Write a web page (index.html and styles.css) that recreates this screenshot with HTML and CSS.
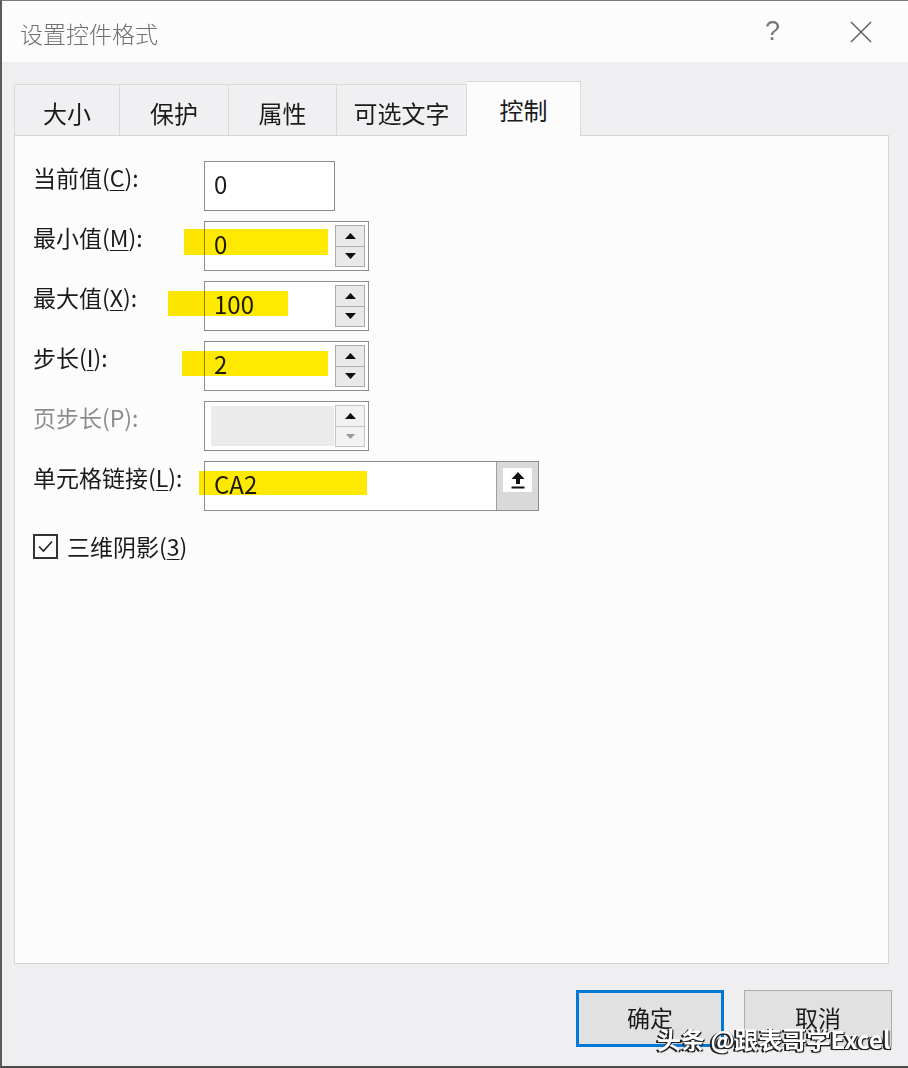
FILE: index.html
```html
<!DOCTYPE html>
<html lang="zh-CN">
<head>
<meta charset="utf-8">
<title>设置控件格式</title>
<link rel="stylesheet" href="styles.css">
</head>
<body>
<div class="window">
  <div class="titlebar">
    <span class="title">设置控件格式</span>
    <span class="help">?</span>
    <span class="close">
      <svg width="22" height="22" viewBox="0 0 22 22"><path d="M1 1 L21 21 M21 1 L1 21" stroke="#555" stroke-width="1.3" fill="none"/></svg>
    </span>
  </div>

  <div class="tabs">
    <div class="tab tab-size">大小</div>
    <div class="tab tab-protect">保护</div>
    <div class="tab tab-prop">属性</div>
    <div class="tab tab-alt">可选文字</div>
    <div class="tab tab-ctrl active">控制</div>
  </div>

  <div class="panel">
    <div class="row">
      <div class="label">当前值(<u>C</u>):</div>
      <div class="input">0</div>
    </div>
    <div class="row">
      <div class="label">最小值(<u>M</u>):</div>
      <div class="spin">
        <div class="val">0</div>
        <div class="btns">
          <div class="sbtn"><svg width="11" height="6" viewBox="0 0 11 6"><path d="M0 6 L5.5 0 L11 6Z" fill="#111"/></svg></div>
          <div class="sbtn"><svg width="11" height="6" viewBox="0 0 11 6"><path d="M0 0 L5.5 6 L11 0Z" fill="#111"/></svg></div>
        </div>
      </div>
    </div>
    <div class="row">
      <div class="label">最大值(<u>X</u>):</div>
      <div class="spin">
        <div class="val">100</div>
        <div class="btns">
          <div class="sbtn"><svg width="11" height="6" viewBox="0 0 11 6"><path d="M0 6 L5.5 0 L11 6Z" fill="#111"/></svg></div>
          <div class="sbtn"><svg width="11" height="6" viewBox="0 0 11 6"><path d="M0 0 L5.5 6 L11 0Z" fill="#111"/></svg></div>
        </div>
      </div>
    </div>
    <div class="row">
      <div class="label">步长(<u>I</u>):</div>
      <div class="spin">
        <div class="val">2</div>
        <div class="btns">
          <div class="sbtn"><svg width="11" height="6" viewBox="0 0 11 6"><path d="M0 6 L5.5 0 L11 6Z" fill="#111"/></svg></div>
          <div class="sbtn"><svg width="11" height="6" viewBox="0 0 11 6"><path d="M0 0 L5.5 6 L11 0Z" fill="#111"/></svg></div>
        </div>
      </div>
    </div>
    <div class="row">
      <div class="label disabled">页步长(P):</div>
      <div class="spin spin-disabled">
        <div class="val"></div>
        <div class="btns">
          <div class="sbtn"><svg width="11" height="6" viewBox="0 0 11 6"><path d="M0 6 L5.5 0 L11 6Z" fill="#111"/></svg></div>
          <div class="sbtn"><svg width="9" height="5" viewBox="0 0 11 6"><path d="M0 0 L5.5 6 L11 0Z" fill="#9a9a9a"/></svg></div>
        </div>
      </div>
    </div>
    <div class="row">
      <div class="label">单元格链接(<u>L</u>):</div>
      <div class="link">
        <div class="val">CA2</div>
        <div class="link-btn">
          <div class="link-icon">
            <svg width="14" height="17" viewBox="0 0 14 17"><path d="M7 0 L13.5 7 L9 7 L9 12 L5 12 L5 7 L0.5 7Z" fill="#111"/><rect x="0.5" y="14.5" width="13" height="2" fill="#111"/></svg>
          </div>
        </div>
      </div>
    </div>
    <div class="check-row">
      <div class="checkbox">
        <svg width="21" height="21" viewBox="0 0 21 21"><path d="M4 10.5 L8.5 15 L17 5.5" stroke="#222" stroke-width="1.6" fill="none"/></svg>
      </div>
      <div class="check-label">三维阴影(<u>3</u>)</div>
    </div>
  </div>

  <div class="footer">
    <button class="btn primary">确定</button>
    <button class="btn">取消</button>
  </div>

  <span class="hl hl-min"></span>
  <span class="hl hl-max"></span>
  <span class="hl hl-step"></span>
  <span class="hl hl-link"></span>

  <div class="watermark">头条 @跟表哥学Excel</div>
</div>
</body>
</html>
```

FILE: styles.css
```css
* { box-sizing: border-box; }

body {
  margin: 0;
  background: #ffffff;
  font-family: "Noto Sans CJK SC", "Noto Sans", sans-serif;
  color: #1b1b1b;
}

.window {
  position: relative;
  width: 908px;
  height: 1068px;
  background: #efeef0;
  border-left: 2px solid #5a5a5a;
  border-top: 1px solid #7a7a7a;
  border-bottom: 2px solid #4a4a4a;
  overflow: hidden;
}

/* title bar */
.titlebar {
  height: 61px;
  background: #fdfcfd;
  display: flex;
  align-items: center;
  padding-left: 18px;
}
.title {
  flex: 1;
  font-size: 23px;
  font-weight: 300;
  color: #707070;
  margin-top: 2px;
}
.help {
  font-family: "Liberation Sans", sans-serif;
  font-size: 27px;
  color: #777;
  margin-right: 70px;
}
.close {
  display: flex;
  margin-right: 36px;
}

/* tabs */
.tabs {
  display: flex;
  align-items: flex-end;
  height: 54px;
  margin: 19px 0 0 12px;
}
.tab {
  height: 51px;
  display: flex;
  align-items: center;
  justify-content: center;
  padding-top: 4px;
  font-size: 24px;
  color: #1b1b1b;
  background: #f0eff1;
  border-top: 1px solid #d9d9d9;
  border-right: 1px solid #d9d9d9;
}
.tab:first-child { border-left: 1px solid #d9d9d9; }
.tab-size { width: 106px; }
.tab-protect { width: 109px; }
.tab-prop { width: 108px; }
.tab-alt { width: 130px; }
.tab-ctrl { width: 114px; }
.tab.active {
  height: 55px;
  padding-top: 0;
  margin-bottom: -1px;
  background: #fdfcfd;
  position: relative;
  z-index: 1;
}

/* panel */
.panel {
  height: 829px;
  margin: 0 19px 0 12px;
  border: 1px solid #d5d5d5;
  background: #fdfcfd;
  padding: 25px 18px;
}
.row {
  display: flex;
  align-items: flex-start;
  height: 50px;
  margin-bottom: 10px;
}
.label {
  width: 171px;
  font-size: 23px;
  line-height: 30px;
  padding-top: 1px;
  white-space: nowrap;
}
.label u, .check-label u {
  text-decoration: underline;
  text-decoration-thickness: 1px;
  text-underline-offset: 3px;
}
.label.disabled { color: #8d8d8d; }

.input {
  width: 131px;
  height: 50px;
  border: 1px solid #8c8c8c;
  background: #fff;
  font-size: 24px;
  padding: 0 0 5px 9px;
  display: flex;
  align-items: center;
}

.spin {
  width: 165px;
  height: 50px;
  border: 1px solid #8c8c8c;
  background: #fff;
  display: flex;
}
.spin .val, .link .val {
  flex: 1;
  font-size: 24px;
  padding: 0 0 5px 9px;
  display: flex;
  align-items: center;
}
.btns {
  width: 30px;
  margin: 3px 3px 3px 0;
  display: flex;
  flex-direction: column;
}
.sbtn {
  flex: 1;
  background: #e9e9e9;
  border: 1px solid #ababab;
  display: flex;
  align-items: center;
  justify-content: center;
}
.sbtn + .sbtn { border-top: none; }

.spin-disabled .val {
  margin: 4px 1px 4px 6px;
  background: #ebebeb;
}
.spin-disabled .sbtn { background: #f2f2f2; border-color: #c4c4c4; }

.link {
  width: 335px;
  height: 50px;
  border: 1px solid #8c8c8c;
  background: #fff;
  display: flex;
}
.link-btn {
  width: 42px;
  background: #d9d9d9;
  border-left: 1px solid #a0a0a0;
  display: flex;
  justify-content: center;
  padding-top: 6px;
}
.link-icon {
  width: 29px;
  height: 24px;
  background: #fff;
  display: flex;
  align-items: center;
  justify-content: center;
}

.check-row {
  margin-top: 20px;
  display: flex;
  align-items: center;
  gap: 9px;
}
.checkbox {
  width: 25px;
  height: 25px;
  border: 2px solid #333;
  background: #fff;
  display: flex;
}
.check-label {
  font-size: 23px;
  line-height: 30px;
}

/* footer */
.footer {
  display: flex;
  justify-content: flex-end;
  gap: 20px;
  margin-top: 26px;
  padding-right: 16px;
}
.btn {
  width: 148px;
  height: 57px;
  background: #e1e1e1;
  border: 1px solid #adadad;
  font-family: "Noto Sans CJK SC", "Noto Sans", sans-serif;
  font-size: 23px;
  color: #1b1b1b;
  padding: 0 0 4px;
}
.btn.primary {
  border: 3px solid #0078d7;
}

/* highlighter marks */
.hl {
  position: absolute;
  background: #ffe900;
  mix-blend-mode: multiply;
  filter: blur(0.6px);
}
.hl-min  { left: 182px; top: 228px; width: 144px; height: 26px; }
.hl-max  { left: 166px; top: 290px; width: 120px; height: 25px; }
.hl-step { left: 180px; top: 350px; width: 146px; height: 25px; }
.hl-link { left: 197px; top: 470px; width: 168px; height: 24px; }

/* watermark */
.watermark {
  position: absolute;
  left: 655px;
  top: 1020px;
  font-size: 24px;
  font-weight: bold;
  color: #ffffff;
  white-space: nowrap;
  text-shadow: -2px 1px 0 #222, 1px 1px 1px #000;
}
```
